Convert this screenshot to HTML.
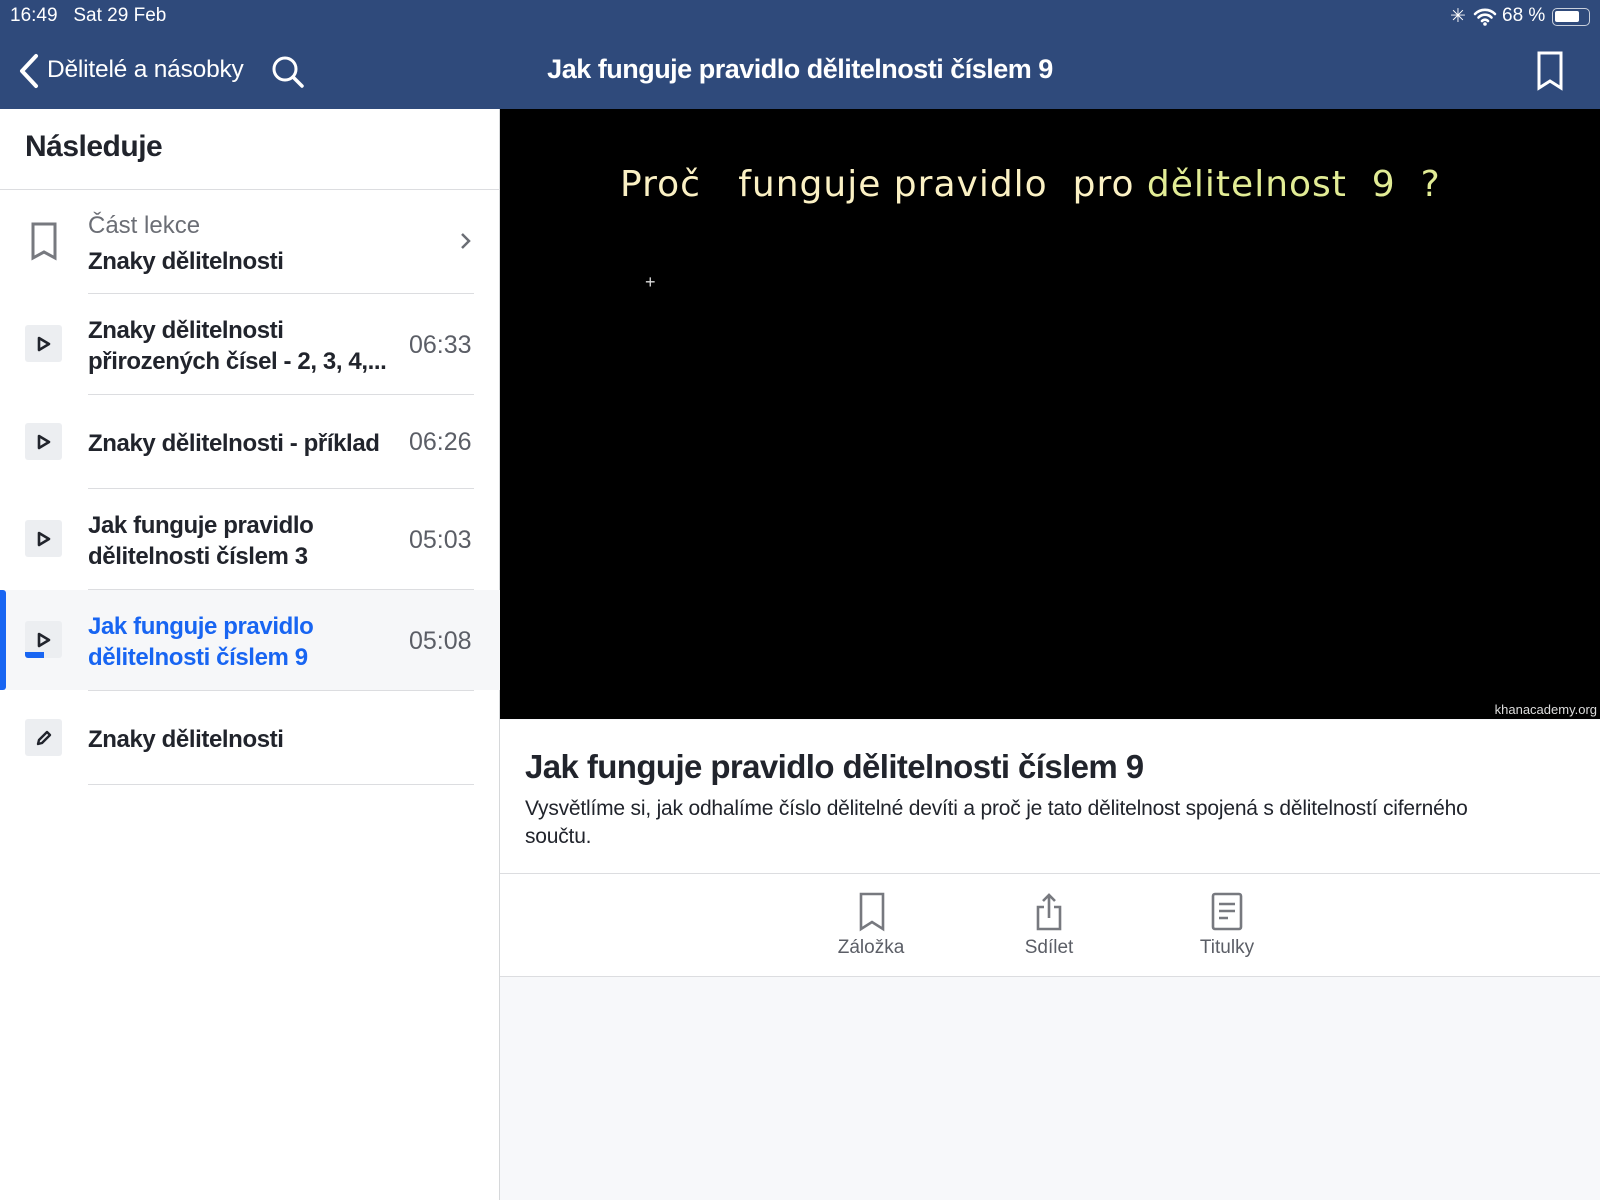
<!DOCTYPE html>
<html><head><meta charset="utf-8"><style>
*{margin:0;padding:0;box-sizing:border-box}
body{width:1600px;height:1200px;overflow:hidden;background:#f7f8fa;font-family:"Liberation Sans",sans-serif;position:relative;color:#21242c}
.a{position:absolute;white-space:nowrap}
.hdr{left:0;top:0;width:1600px;height:109px;background:#2f4a7b}
.side{left:0;top:109px;width:500px;height:1091px;background:#fff;border-right:1px solid #d6d8da}
.line{position:absolute;height:1px;background:#dcdde0}
.ico{position:absolute;left:25px;width:37px;height:37px;background:#eceef1;border-radius:3px}
.t{font-size:24px;font-weight:bold;letter-spacing:-0.4px;color:#21242c;line-height:31px}
.tm{font-size:25px;color:#5b5e66;right:26px}
.hw{font-family:"DejaVu Sans","Liberation Sans",sans-serif;font-size:38px;color:#fbf1c4;font-style:italic;font-weight:200}
</style></head><body>
<div class="a hdr"></div>
<div class="a" style="left:10px;top:5px;color:#fff;font-size:19px">16:49&nbsp;&nbsp;&nbsp;Sat 29 Feb</div>
<div class="a" style="left:1450px;top:5px;color:#fff;font-size:19px">✳</div>
<svg class="a" style="left:1473px;top:8px" width="24" height="18" viewBox="0 0 24 18"><path d="M2 6a14 14 0 0 1 20 0M5.5 9.5a9 9 0 0 1 13 0M9 13a4 4 0 0 1 6 0" stroke="#fff" stroke-width="2.6" fill="none" stroke-linecap="round"/><circle cx="12" cy="16" r="1.8" fill="#fff"/></svg>
<div class="a" style="left:1502px;top:5px;color:#fff;font-size:19px">68 %</div>
<div class="a" style="left:1552px;top:8px;width:38px;height:18px;border:1.5px solid #c9d0dc;border-radius:5px"><div style="margin:2px;width:24px;height:11px;background:#fff;border-radius:2px"></div></div>
<svg class="a" style="left:18px;top:53px" width="22" height="36" viewBox="0 0 22 36"><path d="M18 3L4 18l14 15" stroke="#fff" stroke-width="4" fill="none" stroke-linecap="round" stroke-linejoin="round"/></svg>
<div class="a" style="left:47px;top:56px;color:#fff;font-size:24.5px;letter-spacing:-0.2px">Dělitelé a násobky</div>
<svg class="a" style="left:270px;top:54px" width="36" height="36" viewBox="0 0 36 36"><circle cx="15" cy="15" r="11" stroke="#fff" stroke-width="3" fill="none"/><path d="M23 23l9 9" stroke="#fff" stroke-width="3.5" stroke-linecap="round"/></svg>
<div class="a" style="left:0;width:1600px;text-align:center;top:54px;color:#fff;font-size:27px;font-weight:bold;letter-spacing:-0.5px">Jak funguje pravidlo dělitelnosti číslem 9</div>
<svg class="a" style="left:1536px;top:51px" width="28" height="40" viewBox="0 0 28 40"><path d="M3 2h22v35l-11-7-11 7z" stroke="#fff" stroke-width="3" fill="none" stroke-linejoin="miter"/></svg>

<div class="a side"></div>
<div class="a" style="left:25px;top:130px;font-size:30px;font-weight:bold;letter-spacing:-0.5px">Následuje</div>
<div class="line" style="left:0;top:189px;width:500px"></div>

<svg class="a" style="left:30px;top:222px" width="28" height="40" viewBox="0 0 28 40"><path d="M3 2h22v34l-11-6-11 6z" stroke="#77797f" stroke-width="3" fill="none"/></svg>
<div class="a" style="left:88px;top:212px;font-size:24px;color:#6b6e75">Část lekce</div>
<div class="a t" style="left:88px;top:246px">Znaky dělitelnosti</div>
<svg class="a" style="left:460px;top:232px" width="12" height="18" viewBox="0 0 12 18"><path d="M2 2l7 7-7 7" stroke="#6b6e75" stroke-width="2.5" fill="none"/></svg>
<div class="line" style="left:88px;top:293px;width:386px"></div>

<div class="ico" style="top:325px"></div>
<svg class="a" style="left:37px;top:336px" width="14" height="16" viewBox="0 0 14 16"><path d="M2 2l10 6-10 6z" stroke="#21242c" stroke-width="2.6" fill="none" stroke-linejoin="round"/></svg>
<div class="a t" style="left:88px;top:315px">Znaky dělitelnosti<br>přirozených čísel - 2, 3, 4,...</div>
<div class="a tm" style="left:409px;top:331px">06:33</div>
<div class="line" style="left:88px;top:394px;width:386px"></div>

<div class="ico" style="top:423px"></div>
<svg class="a" style="left:37px;top:434px" width="14" height="16" viewBox="0 0 14 16"><path d="M2 2l10 6-10 6z" stroke="#21242c" stroke-width="2.6" fill="none" stroke-linejoin="round"/></svg>
<div class="a t" style="left:88px;top:428px">Znaky dělitelnosti - příklad</div>
<div class="a tm" style="left:409px;top:428px">06:26</div>
<div class="line" style="left:88px;top:488px;width:386px"></div>

<div class="ico" style="top:520px"></div>
<svg class="a" style="left:37px;top:531px" width="14" height="16" viewBox="0 0 14 16"><path d="M2 2l10 6-10 6z" stroke="#21242c" stroke-width="2.6" fill="none" stroke-linejoin="round"/></svg>
<div class="a t" style="left:88px;top:510px">Jak funguje pravidlo<br>dělitelnosti číslem 3</div>
<div class="a tm" style="left:409px;top:526px">05:03</div>
<div class="line" style="left:88px;top:589px;width:386px"></div>

<div class="a" style="left:0;top:590px;width:500px;height:100px;background:#f6f7f9"></div>
<div class="a" style="left:0;top:590px;width:6px;height:100px;background:#1865f2;border-radius:0 3px 3px 0"></div>
<div class="ico" style="top:621px"></div>
<svg class="a" style="left:37px;top:632px" width="14" height="16" viewBox="0 0 14 16"><path d="M2 2l10 6-10 6z" stroke="#21242c" stroke-width="2.6" fill="none" stroke-linejoin="round"/></svg>
<div class="a" style="left:25px;top:652px;width:19px;height:6px;background:#1865f2;border-radius:0 0 0 3px"></div>
<div class="a t" style="left:88px;top:611px;color:#1865f2">Jak funguje pravidlo<br>dělitelnosti číslem 9</div>
<div class="a tm" style="left:409px;top:627px">05:08</div>
<div class="line" style="left:88px;top:690px;width:386px"></div>

<div class="ico" style="top:719px"></div>
<svg class="a" style="left:34px;top:728px" width="20" height="20" viewBox="0 0 20 20"><path d="M4 16l1-4 8-8 3 3-8 8z" stroke="#21242c" stroke-width="2.4" fill="none" stroke-linejoin="round"/></svg>
<div class="a t" style="left:88px;top:724px">Znaky dělitelnosti</div>
<div class="line" style="left:88px;top:784px;width:386px"></div>

<div class="a" style="left:500px;top:109px;width:1100px;height:610px;background:#000"></div>
<div class="a hw" style="left:620px;top:164px;font-style:normal;font-weight:normal;font-size:36px;letter-spacing:1px">Proč&nbsp;&nbsp; funguje pravidlo &nbsp;pro <span style="color:#e2ec95">dělitelnost&nbsp; 9&nbsp; ?</span></div>
<div class="a" style="left:645px;top:272px;color:#ddd;font-size:18px">+</div>
<div class="a" style="right:3px;top:702px;color:#ddd;font-size:13px">khanacademy.org</div>

<div class="a" style="left:500px;top:720px;width:1100px;height:153px;background:#fff"></div>
<div class="a" style="left:525px;top:748px;font-size:33px;font-weight:bold;letter-spacing:-0.6px">Jak funguje pravidlo dělitelnosti číslem 9</div>
<div class="a" style="left:525px;top:795px;font-size:21px;line-height:28px;letter-spacing:-0.2px;white-space:normal;width:1010px">Vysvětlíme si, jak odhalíme číslo dělitelné devíti a proč je tato dělitelnost spojená s dělitelností ciferného součtu.</div>
<div class="line" style="left:500px;top:873px;width:1100px;background:#dcdde0"></div>
<div class="a" style="left:500px;top:874px;width:1100px;height:103px;background:#fff;border-bottom:1px solid #dcdde0"></div>

<svg class="a" style="left:858px;top:892px" width="28" height="40" viewBox="0 0 28 40"><path d="M3 2h22v35l-11-7-11 7z" stroke="#77797f" stroke-width="2.6" fill="none"/></svg>
<div class="a" style="left:820px;width:102px;text-align:center;top:937px;font-size:19px;color:#5b5e66">Záložka</div>
<svg class="a" style="left:1034px;top:892px" width="30" height="40" viewBox="0 0 30 40"><path d="M10 15H4v22h22V15h-6M15 26V3M9 9l6-6 6 6" stroke="#77797f" stroke-width="2.6" fill="none"/></svg>
<div class="a" style="left:998px;width:102px;text-align:center;top:937px;font-size:19px;color:#5b5e66">Sdílet</div>
<svg class="a" style="left:1211px;top:892px" width="32" height="40" viewBox="0 0 32 40"><rect x="2" y="2" width="28" height="35" rx="2" stroke="#77797f" stroke-width="2.6" fill="none"/><path d="M8 12h16M8 19h16M8 26h9" stroke="#77797f" stroke-width="2.6"/></svg>
<div class="a" style="left:1176px;width:102px;text-align:center;top:937px;font-size:19px;color:#5b5e66">Titulky</div>
</body></html>
